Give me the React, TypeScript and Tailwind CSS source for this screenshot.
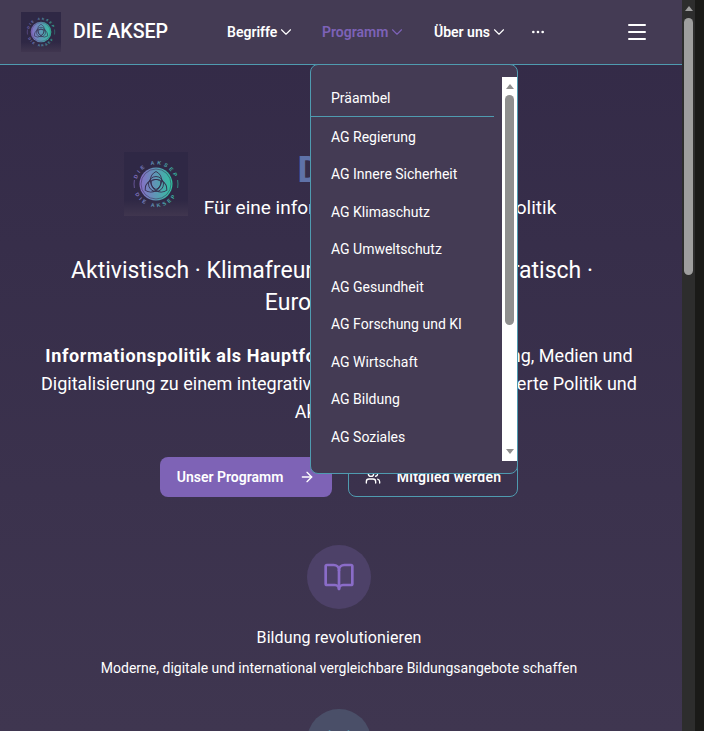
import React from 'react';
import { ArrowRight, BookOpen, ChevronDown, Menu, MoreHorizontal, Radio, Users } from 'lucide-react';

const programItems = [
  'AG Regierung',
  'AG Innere Sicherheit',
  'AG Klimaschutz',
  'AG Umweltschutz',
  'AG Gesundheit',
  'AG Forschung und KI',
  'AG Wirtschaft',
  'AG Bildung',
  'AG Soziales',
];

// Round logo: ring of text around a gradient disc with a knot
const Logo = ({ id, className }: { id: string; className: string }) => (
  <svg viewBox="0 0 64 64" className={className}>
    <defs>
      <linearGradient id={`${id}-g`} x1="0" y1="0" x2="1" y2="0">
        <stop offset="0" stopColor="#8a6cc8" />
        <stop offset="1" stopColor="#2fc3a0" />
      </linearGradient>
      <linearGradient id={`${id}-t`} gradientUnits="userSpaceOnUse" x1="9" y1="0" x2="55" y2="0">
        <stop offset="0" stopColor="#8a6cc8" />
        <stop offset="1" stopColor="#2fc3a0" />
      </linearGradient>
      <linearGradient id={`${id}-bg`} x1="0" y1="0" x2="0" y2="1">
        <stop offset="0" stopColor="#2f2845" />
        <stop offset="0.75" stopColor="#2f2845" />
        <stop offset="1" stopColor="#40364f" />
      </linearGradient>
      <path id={`${id}-top`} d="M12.5 32a19.5 19.5 0 0 1 39 0" />
      <path id={`${id}-bot`} d="M9 32a23 23 0 0 0 46 0" />
    </defs>
    <rect width="64" height="64" fill={`url(#${id}-bg)`} />
    <text fontSize="5.2" fontWeight="700" letterSpacing="2.6" fill={`url(#${id}-t)`} fontFamily="'Liberation Sans', sans-serif">
      <textPath href={`#${id}-top`} startOffset="50%" textAnchor="middle">DIE AKSEP</textPath>
    </text>
    <text fontSize="5.2" fontWeight="700" letterSpacing="2.6" fill={`url(#${id}-t)`} fontFamily="'Liberation Sans', sans-serif">
      <textPath href={`#${id}-bot`} startOffset="50%" textAnchor="middle">DIE AKSEP</textPath>
    </text>
    <path d="M10.4 28a22 22 0 0 0 0 8M53.6 28a22 22 0 0 1 0 8" fill="none" stroke={`url(#${id}-t)`} strokeWidth="0.6" />
    <circle cx="32" cy="32" r="16.5" fill={`url(#${id}-g)`} />
    <g fill="none" stroke="#352c4c" strokeWidth="0.9">
      <circle cx="32" cy="32" r="15" strokeWidth="0.5" />
      <circle cx="32" cy="32" r="7.5" />
      <path d="M32 19.5A10 10 0 0 0 32 37.5A10 10 0 0 0 32 19.5Z" />
      <path d="M32 19.5A10 10 0 0 0 32 37.5A10 10 0 0 0 32 19.5Z" transform="rotate(120 32 32)" />
      <path d="M32 19.5A10 10 0 0 0 32 37.5A10 10 0 0 0 32 19.5Z" transform="rotate(240 32 32)" />
    </g>
  </svg>
);

const NavItem = ({ label, active }: { label: string; active?: boolean }) => (
  <a className={`flex items-center text-sm font-semibold ${active ? 'text-[#7d62b8]' : 'text-white'}`}>
    {label}
    <ChevronDown size={18} strokeWidth={1.5} />
  </a>
);

export default function App() {
  return (
    <div className="flex h-[731px] w-[704px] overflow-hidden bg-[#1a1a18] font-['Roboto',sans-serif] text-white">
      <div className="relative h-full w-[682px] overflow-hidden bg-gradient-to-b from-[#332a47] to-[#3f3650]">
        <header className="flex h-[65px] items-center border-b border-[#4f9bb0] bg-[#443b54] pl-[21px]">
          <Logo id="nav" className="h-10 w-10" />
          <span className="ml-3 w-[95px] whitespace-nowrap text-[19.6px] font-medium">DIE AKSEP</span>
          <nav className="ml-[59px] flex items-center">
            <div className="w-[95px]"><NavItem label="Begriffe" /></div>
            <div className="w-[112px]"><NavItem label="Programm" active /></div>
            <div className="w-[96px]"><NavItem label="Über uns" /></div>
            <MoreHorizontal size={16} />
          </nav>
          <Menu size={24} strokeWidth={2} className="ml-[79px]" />
        </header>

        <main className="flex w-[678px] flex-col items-center pt-[81px]">
          <div className="flex items-center gap-4 pl-[2px]">
            <Logo id="hero" className="h-16 w-16" />
            <div className="text-center">
              <h1 className="text-4xl leading-[48px] font-bold tracking-[-1px] text-[#5f72a8]">Die AKSEP</h1>
              <p className="text-[19px] leading-7">Für eine informationsbasierte Klimapolitik</p>
            </div>
          </div>

          <h2 className="mt-[33px] text-center text-[23px] leading-8">
            <span className="block pr-[14px]">
              Aktivistisch · Klimafreundlich<span className="tracking-[-2px]"> · Sozial · </span>Demokratisch ·
            </span>
            Eurofreundlich
          </h2>

          <p className="mt-[23px] w-[600px] text-center text-lg leading-7">
            <strong className="font-bold tracking-[0.6px]">Informationspolitik als Hauptfokus:</strong> Wir verbinden Bildung, Medien und
            Digitalisierung zu einem integrativen Ansatz für eine informierte Politik und
            Aktivismus
          </p>

          <div className="mt-[31px] flex gap-4">
            <a className="flex h-10 w-[172px] items-center justify-center gap-4 rounded-lg bg-[#7e63b6] text-sm font-semibold">
              Unser Programm
              <ArrowRight size={16} />
            </a>
            <a className="flex h-10 w-[170px] items-center justify-center gap-4 rounded-lg border border-[#4f9bb0] text-sm font-semibold tracking-[0.25px]">
              <Users size={16} />
              Mitglied werden
            </a>
          </div>

          <div className="mt-12 flex h-16 w-16 items-center justify-center rounded-full bg-[#4d4168]">
            <BookOpen size={32} strokeWidth={2} className="text-[#8a6cc8]" />
          </div>
          <h3 className="mt-[17px] text-base leading-6 tracking-[0.1px]">Bildung revolutionieren</h3>
          <p className="mt-2 text-sm">Moderne, digitale und international vergleichbare Bildungsangebote schaffen</p>

          <div className="mt-[31px] flex h-16 w-16 shrink-0 items-center justify-center rounded-full bg-[#4a4f68]">
            <Radio size={32} strokeWidth={2} className="text-[#56a9c0]" />
          </div>
        </main>

        {/* open Programm dropdown */}
        <div className="absolute left-[310px] top-[64px] flex h-[410px] w-[208px] rounded-lg border border-[#4f9bb0] bg-[#443b54] py-3">
          <div className="min-w-0 flex-1 overflow-hidden">
            <div className="flex h-[39px] items-end pb-[8px] pl-5 text-sm">Präambel</div>
            <div className="mr-[8px] h-px bg-[#4f9bb0]" />
            <ul>
              {programItems.map((item) => (
                <li key={item} className="flex h-[37.5px] items-center pl-5 text-sm first:mt-[1px]">{item}</li>
              ))}
            </ul>
          </div>
          <div className="flex w-[15px] flex-col items-center bg-white">
            <div className="mt-[7px] h-0 w-0 border-x-[4.5px] border-b-[5px] border-x-transparent border-b-[#8f8f8f]" />
            <div className="mt-[6px] h-[230px] w-[9px] rounded-full bg-[#8f8f8f]" />
            <div className="mt-auto mb-[7px] h-0 w-0 border-x-[4.5px] border-t-[5px] border-x-transparent border-t-[#8f8f8f]" />
          </div>
        </div>
      </div>

      {/* browser scrollbar */}
      <div className="flex h-full w-[13px] flex-col items-center bg-[#2d2d2d]">
        <div className="mt-[6px] h-0 w-0 border-x-[4.5px] border-b-[5px] border-x-transparent border-b-[#9e9e9e]" />
        <div className="mt-[7px] h-[257px] w-[9px] rounded-full bg-[#9e9e9e]" />
      </div>
    </div>
  );
}
